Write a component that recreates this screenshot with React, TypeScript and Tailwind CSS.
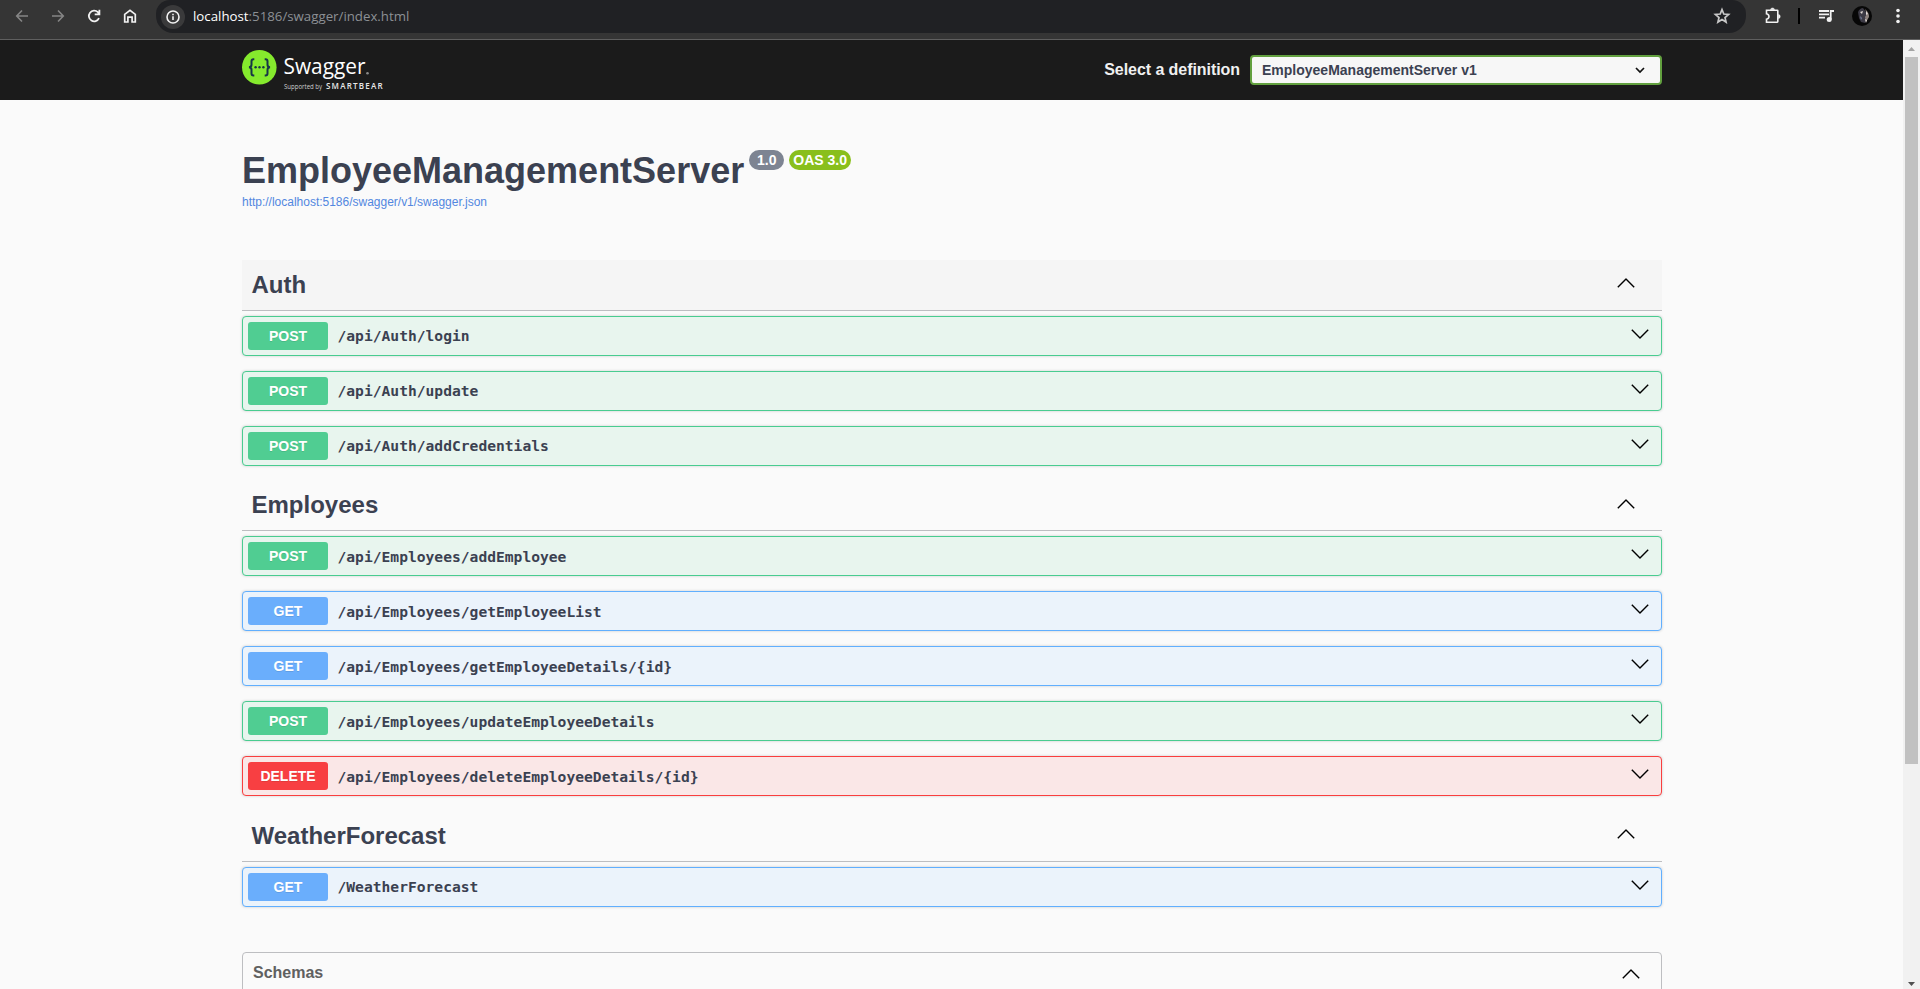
import React from "react";

type Method = "POST" | "GET" | "DELETE";
type Op = { method: Method; path: string };

const tones: Record<Method, { row: string; badge: string }> = {
  POST: { row: "border-[#49cc90] bg-[#e8f5ee]", badge: "bg-[#50cd92]" },
  GET: { row: "border-[#61affe] bg-[#ebf3fb]", badge: "bg-[#6aaefc]" },
  DELETE: { row: "border-[#f93e3e] bg-[#fae7e7]", badge: "bg-[#f83f42]" },
};

const sections: { name: string; head: string; text: string; path: string; ops: Op[] }[] = [
  {
    name: "Auth",
    head: "h-[51px] bg-[#f5f5f5]",
    text: "pb-px",
    path: "",
    ops: [
      { method: "POST", path: "/api/Auth/login" },
      { method: "POST", path: "/api/Auth/update" },
      { method: "POST", path: "/api/Auth/addCredentials" },
    ],
  },
  {
    name: "Employees",
    head: "h-[50px]",
    text: "pb-[2px]",
    path: "pt-[2px]",
    ops: [
      { method: "POST", path: "/api/Employees/addEmployee" },
      { method: "GET", path: "/api/Employees/getEmployeeList" },
      { method: "GET", path: "/api/Employees/getEmployeeDetails/{id}" },
      { method: "POST", path: "/api/Employees/updateEmployeeDetails" },
      { method: "DELETE", path: "/api/Employees/deleteEmployeeDetails/{id}" },
    ],
  },
  {
    name: "WeatherForecast",
    head: "h-[51px]",
    text: "pb-px",
    path: "",
    ops: [{ method: "GET", path: "/WeatherForecast" }],
  },
];

function Chevron({ up = false, className = "" }: { up?: boolean; className?: string }) {
  return (
    <svg width="18" height="10" viewBox="0 0 18 10" fill="none" stroke="#000" strokeWidth="1.4" className={className}>
      <path d={up ? "M.8 9.2 9 1l8.2 8.2" : "M.8.8 9 9 17.2.8"} strokeLinejoin="round" />
    </svg>
  );
}

function BrowserBar() {
  return (
    <div className="flex h-10 shrink-0 border-b border-[#5f5f5f] bg-[#353535] font-['Open_Sans',sans-serif]">
      <div className="flex h-8 w-[156px] items-center gap-4 pl-3">
        <svg width="20" height="20" viewBox="0 0 20 20" fill="none" stroke="#858585" strokeWidth="1.6">
          <path d="M16 10H5M10 4.5 4.7 10l5.3 5.5" />
        </svg>
        <svg width="20" height="20" viewBox="0 0 20 20" fill="none" stroke="#858585" strokeWidth="1.6">
          <path d="M4 10h11M10 4.5l5.3 5.5-5.3 5.5" />
        </svg>
        <svg width="20" height="20" viewBox="0 0 20 20" fill="none" stroke="#f2f2f2" strokeWidth="1.8">
          <path d="M15 12.2A5.3 5.3 0 1 1 13.9 6.2L15.2 8M15.4 3.8v4.6h-4.7" />
        </svg>
        <svg width="20" height="20" viewBox="0 0 20 20" fill="none" stroke="#f2f2f2" strokeWidth="1.7">
          <path d="M4.7 16V8.3L10 4.3l5.3 4V16h-3.2v-4.8H7.9V16z" />
        </svg>
      </div>
      <div className="flex h-[33px] w-[1590px] items-center rounded-b-[17px] rounded-t-[14px] bg-[#202124] pl-[5px] pr-[14px]">
        <div className="flex size-6 items-center justify-center rounded-full bg-[#3a3a3b]">
          <svg width="16" height="16" viewBox="0 0 16 16" fill="none" stroke="#f2f2f2" strokeWidth="1.6">
            <circle cx="8" cy="8" r="6" />
            <path d="M8 7.3v3.6M8 4.7v1.6" />
          </svg>
        </div>
        <div className="ml-2 whitespace-nowrap pb-px text-[13.27px] leading-5 text-[#8c9095]">
          <span className="text-white">localhost</span>:5186/swagger/index.html
        </div>
        <svg width="20" height="20" viewBox="0 0 20 20" fill="none" stroke="#c8c8c8" strokeWidth="1.7" className="-mt-px ml-auto">
          <path d="m10 3.6 1.8 4.4 4.8.4-3.6 3.1 1.1 4.6-4.1-2.5-4.1 2.5L7 11.500 3.400 8.400 8.200 8z" />
        </svg>
      </div>
      <div className="flex h-8 items-center">
        <svg width="20" height="20" viewBox="0 0 20 20" fill="none" stroke="#f2f2f2" strokeWidth="1.6" className="ml-[17px]">
          <path d="M3.500 4.300H14.300Q14.800 4.300 14.800 4.800V15.600Q14.800 16.200 14.300 16.200H3.500V13.200C6.800 12.600 6.800 8.400 3.500 7.800z" />
          <path d="M7.500 3.700a2 1.700 0 0 1 4 0zM15.500 8.500a1.700 2 0 0 1 0 4z" fill="#f2f2f2" strokeWidth=".5" />
        </svg>
        <div className="ml-[15px] h-4 w-0.5 bg-black" />
        <svg width="18" height="16" viewBox="0 0 18 16" fill="none" stroke="#f2f2f2" strokeWidth="1.800" className="ml-[18px]">
          <path d="M1 3h10M1 6.300h10M1 9.600h6M12.700 11.500V3H16" />
          <circle cx="11.200" cy="11.500" r="2.500" fill="#f2f2f2" stroke="none" />
        </svg>
        <svg width="20" height="20" viewBox="0 0 20 20" className="ml-4">
          <circle cx="10" cy="10" r="10" fill="#070707" />
          <path d="M6 6q2-4 5-4l3 4 2 6-3 5-4-1-2-4z" fill="#3c3a45" />
          <path d="M13 3q4 3 4 8l-3 5-1-5 2-3z" fill="#8d827e" />
          <path d="m8 6 3-1-1 3zM14 5l2 3-2 1zM13 13l2 1-1 3z" fill="#e4dcd8" />
          <path d="m8 10 2 2-1 2z" fill="#76809f" />
        </svg>
        <svg width="6" height="16" viewBox="0 0 6 16" fill="#f2f2f2" className="ml-[23px]">
          <circle cx="3" cy="2.500" r="1.800" />
          <circle cx="3" cy="8" r="1.800" />
          <circle cx="3" cy="13.500" r="1.800" />
        </svg>
      </div>
    </div>
  );
}

function Logo() {
  return (
    <svg width="146" height="44" viewBox="0 0 146 44" className="font-['Open_Sans',sans-serif]">
      <circle cx="17.300" cy="19.300" r="17.300" fill="#85ea2d" />
      <g fill="none" stroke="#173647" strokeWidth="2">
        <path d="M12.300 11.200h-.8q-2 0-2 2v3.600q0 2.300-2.500 2.500 2.500.2 2.500 2.500v3.600q0 2 2 2h.8" />
        <path d="M22.700 11.200h.8q2 0 2 2v3.600q0 2.300 2.500 2.500-2.500.2-2.500 2.500v3.600q0 2-2 2h-.8" />
      </g>
      <g fill="#173647">
        <circle cx="13.600" cy="19.300" r="1.200" />
        <circle cx="17.500" cy="19.300" r="1.200" />
        <circle cx="21.400" cy="19.300" r="1.200" />
      </g>
      <text x="41.500" y="26.300" fontSize="22.500" fontWeight="400" fill="#fff" textLength="82" lengthAdjust="spacingAndGlyphs">Swagger</text>
      <circle cx="125.500" cy="25.300" r="1.300" fill="#8a8a8a" />
      <text x="42" y="40.500" fontSize="6.500" fill="#d0d0d0" textLength="38" lengthAdjust="spacingAndGlyphs">Supported by</text>
      <text x="84" y="40.500" fontSize="8" fontWeight="600" fill="#e8e8e8" textLength="56.500" lengthAdjust="spacing">SMARTBEAR</text>
    </svg>
  );
}

function Row({ op, pathClass }: { op: Op; pathClass: string }) {
  const tone = tones[op.method];
  return (
    <div className={`mb-[15px] flex h-10 items-center rounded border pl-[5px] pr-[12px] shadow-[0_0_3px_rgba(0,0,0,0.19)] ${tone.row}`}>
      <div className={`flex h-7 w-20 items-center justify-center rounded-[3px] text-sm font-bold text-white [text-shadow:0_1px_0_rgba(0,0,0,0.1)] ${tone.badge}`}>
        {op.method}
      </div>
      <div className={`whitespace-nowrap pl-[9.5px] font-['DejaVu_Sans_Mono',monospace] text-[14.63px] font-bold leading-5 ${pathClass}`}>{op.path}</div>
      <Chevron className="-mt-1 ml-auto" />
    </div>
  );
}

export default function App() {
  return (
    <div className="flex h-[989px] w-[1920px] flex-col overflow-hidden bg-[#fafafa] font-['Liberation_Sans',sans-serif] text-[#3b4151]">
      <BrowserBar />
      <div className="flex min-h-0 flex-1">
        <div className="w-[1903px] overflow-hidden">
          <header className="flex h-[60px] items-center justify-between bg-[#1b1b1b] pl-[242px] pr-[241px]">
            <Logo />
            <div className="flex items-center">
              <span className="mr-[10px] text-base font-bold leading-5 tracking-[-0.06px] text-[#f0f0f0]">Select a definition</span>
              <div className="flex h-[30px] w-[412px] items-center justify-between rounded border-2 border-[#62a03f] bg-[#f7f7f7] pl-[10px] pr-[15px] text-sm font-bold">
                EmployeeManagementServer v1
                <svg width="10" height="7" viewBox="0 0 10 7" fill="none" stroke="#111" strokeWidth="1.700">
                  <path d="m1 1 4 4 4-4" />
                </svg>
              </div>
            </div>
          </header>

          <main className="w-[1662px] pl-[242px]">
            <div className="h-40 pt-[50px]">
              <div className="flex items-start">
                <h1 className="text-[36px] font-bold leading-[41px]">EmployeeManagementServer</h1>
                <span className="ml-[5px] flex h-5 w-[35px] items-center justify-center rounded-full bg-[#7d8492] text-sm font-bold text-white">1.0</span>
                <span className="ml-[5px] flex h-5 w-[62px] items-center justify-center whitespace-nowrap rounded-full bg-[#89bf1c] text-sm font-bold text-white">OAS 3.0</span>
              </div>
              <a className="block pt-[3px] text-xs leading-4 tracking-[-0.01px] text-[#5287e0]">http://localhost:5186/swagger/v1/swagger.json</a>
            </div>

            {sections.map((s) => (
              <section key={s.name}>
                <div className={`mb-[5px] flex items-center justify-between border-b border-[#bdbec1] pl-[9.5px] pr-[27px] ${s.head}`}>
                  <h2 className={`text-2xl font-bold leading-8 ${s.text}`}>{s.name}</h2>
                  <Chevron up className="-mt-[3.5px]" />
                </div>
                {s.ops.map((op) => (
                  <Row key={op.path} op={op} pathClass={s.path} />
                ))}
              </section>
            ))}

            <div className="mt-[45px] flex h-24 items-start justify-between rounded border border-[#bdbec1] pl-[10px] pr-[21px] pt-[8px]">
              <h2 className="text-base font-bold leading-6 text-[#606060]">Schemas</h2>
              <Chevron up className="mt-[7.5px]" />
            </div>
          </main>
        </div>

        <div className="flex w-[17px] flex-col items-center bg-[#f1f1f1]">
          <div className="flex h-[17px] items-center">
            <svg width="7" height="4" viewBox="0 0 7 4" fill="#a3a3a3"><path d="M3.500 0 7 4H0z" /></svg>
          </div>
          <div className="h-[707px] w-[13px] bg-[#c1c1c1]" />
          <div className="mt-auto flex h-[8px] items-start pt-px">
            <svg width="7" height="4" viewBox="0 0 7 4" fill="#505050"><path d="M0 0h7L3.500 4z" /></svg>
          </div>
        </div>
      </div>
    </div>
  );
}
